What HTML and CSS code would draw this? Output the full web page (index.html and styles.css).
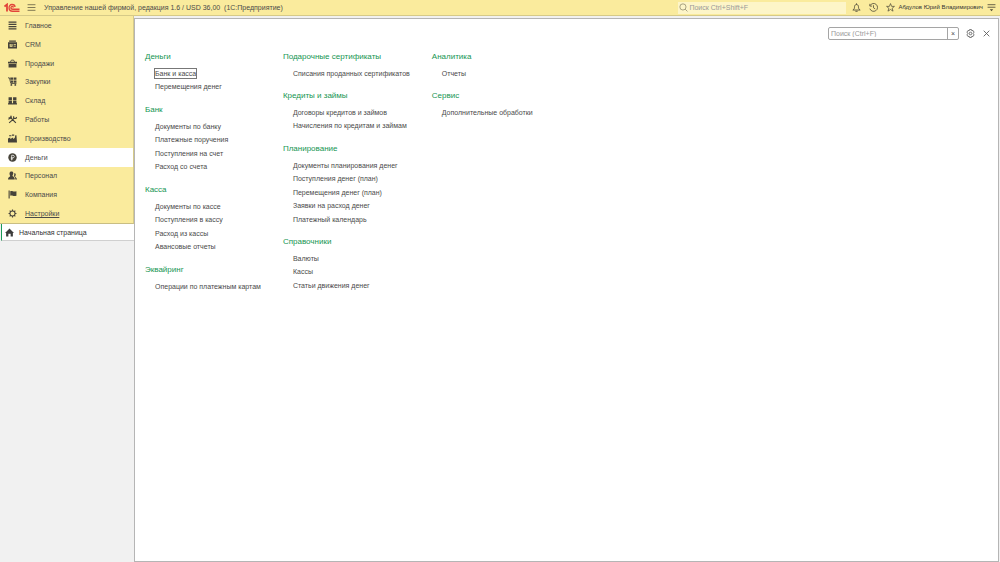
FILE: index.html
```html
<!DOCTYPE html>
<html lang="ru">
<head>
<meta charset="utf-8">
<title>Управление нашей фирмой</title>
<link rel="stylesheet" href="styles.css">
</head>
<body>
<header class="topbar">
  <svg class="logo" viewBox="0 0 32 20" fill="none" stroke="#e2443a" stroke-width="2.6"><path d="M1 7l5-4v14" stroke-width="3.600"/><path d="M31 16.500H17c-9 0-9-13.500-1-13.500 4 0 6 2 6 5"/><path d="M31 12.500H17.500c-5 0-4.500-5.500-1-5.500 1.500 0 2.500 .8 2.500 2"/></svg>
  <button class="icon-btn menu-btn" aria-label="Меню"><svg class="icon" viewBox="0 0 16 16" stroke="#6b6547" stroke-width="1.500"><path d="M1 3h14M1 8h14M1 13h14"/></svg></button>
  <h1 class="app-title">Управление нашей фирмой, редакция 1.6 / USD 36,00&nbsp; (1С:Предприятие)</h1>
  <label class="global-search">
    <svg class="icon" viewBox="0 0 16 16" fill="none" stroke="#8b8568" stroke-width="1.300"><circle cx="7" cy="7" r="5.500"/><path d="M11 11l4 4"/></svg>
    <input type="text" placeholder="Поиск Ctrl+Shift+F" aria-label="Поиск Ctrl+Shift+F">
  </label>
  <div class="tools">
    <button class="icon-btn" aria-label="Уведомления"><svg class="icon" viewBox="0 0 16 16" fill="none" stroke="#4e4a38" stroke-width="1.500"><path d="M1.500 12.500c2.500-1.500 3-3 3-6 0-5 7-5 7 0 0 3 .5 4.500 3 6z"/><path d="M6 14.800h4M8 .5V3"/></svg></button>
    <button class="icon-btn" aria-label="История"><svg class="icon" viewBox="0 0 16 16" fill="none" stroke="#4e4a38" stroke-width="1.400"><path d="M2 4.500A7 7 0 1 1 1.500 10M1.500 1.500v4h4M8 4v4.500l3 2"/></svg></button>
    <button class="icon-btn" aria-label="Избранное"><svg class="icon" viewBox="0 0 16 16" fill="none" stroke="#4e4a38" stroke-width="1.300"><path d="M8 1l2 5h5l-4 3.300 1.500 5.200L8 11.500l-4.500 3L5 9.300 1 6h5z"/></svg></button>
  </div>
  <a class="user" href="#">Абдулов Юрий Владимирович</a>
  <button class="icon-btn" aria-label="Настройка панели"><svg class="icon" viewBox="0 0 16 16" stroke="#4e4a38" stroke-width="1.500"><path d="M1 3h14M1 7.500h14"/><path d="M5 11h6l-3 3.500z" fill="#4e4a38" stroke="none"/></svg></button>
</header>
<div class="workspace">
  <aside class="sidebar">
    <nav class="sections">
      <a class="section" href="#"><svg class="icon" viewBox="0 0 16 16" stroke="#46433a" stroke-width="2"><path d="M1 2h14M1 6h14M1 10h14M1 14h14"/></svg>Главное</a>
      <a class="section" href="#"><svg class="icon" viewBox="0 0 16 16" fill="#46433a"><path fill-rule="evenodd" d="M2 1h12v2H2zM0 4h16v11H0zM3 7v5h5V7zM10 7v1.500h4V7zM10 10v1.500h4V10z"/><circle cx="5.500" cy="8.800" r="1.300"/></svg>CRM</a>
      <a class="section" href="#"><svg class="icon" viewBox="0 0 16 16" fill="#46433a"><path d="M1 9h14v6H1zM0 5h16v3H0z"/><path d="M4 6l2-4h4l2 4" fill="none" stroke="#46433a" stroke-width="1.500"/></svg>Продажи</a>
      <a class="section" href="#"><svg class="icon" viewBox="0 0 16 16" fill="#46433a"><path d="M4 1h5v4H4zM10 1h5v4h-5zM5 6h4v4H5zM10 6h5v4h-5z"/><path d="M0 1.500h2.500L5 11.500h10" fill="none" stroke="#46433a" stroke-width="1.500"/><circle cx="6" cy="14" r="1.700"/><circle cx="13" cy="14" r="1.700"/></svg>Закупки</a>
      <a class="section" href="#"><svg class="icon" viewBox="0 0 16 16" fill="#46433a"><path d="M1 2h6v5H1zM9 2h6v5H9zM1 8h6v5H1zM9 8h6v5H9zM0 13h16v2H0z"/></svg>Склад</a>
      <a class="section" href="#"><svg class="icon" viewBox="0 0 16 16" fill="none" stroke="#46433a" stroke-width="2"><path d="M4 4l10 10M2 14L11 6M1 5l3 1 2-2-1-3M10 2v4h4l2-2"/><path d="M1 8l4-5"/></svg>Работы</a>
      <a class="section" href="#"><svg class="icon" viewBox="0 0 16 16" fill="#46433a"><path d="M0 15V8l4-2v3l5-3v3l3-2 1-5h2l1 13zM2 2h4v2H2zM7 1h4v2H7z"/></svg>Производство</a>
      <a class="section section--active" href="#" aria-current="page"><svg class="icon" viewBox="0 0 16 16" fill="none"><circle cx="8" cy="8" r="7.500" fill="#46433a"/><path d="M6.500 13V4h2.500c3 0 3 4.500 0 4.500H5M5 10.500h4" stroke="#fff" stroke-width="1.300"/></svg>Деньги</a>
      <a class="section" href="#"><svg class="icon" viewBox="0 0 16 16" fill="#46433a"><path d="M6 1c5 0 3.500 5 2 7 0 2 4 2 4 7H0c0-4 3-4 4-6C2 6 2 1 6 1z"/><path d="M11 4c4 0 3 4 1.500 5.500 0 1.500 3 2 3.500 5.500h-3c0-3-1-4.500-2.500-6C11.500 7 11 5 11 4z"/></svg>Персонал</a>
      <a class="section" href="#"><svg class="icon" viewBox="0 0 16 16" fill="#46433a"><path d="M1 1h2v14H1zM4 2c4-1.500 5 2 11 0v8c-6 2-7-1.500-11 0z"/></svg>Компания</a>
      <a class="section section--underlined" href="#"><svg class="icon" viewBox="0 0 16 16" fill="none" stroke="#46433a"><circle cx="8" cy="8" r="4.500" stroke-width="1.800"/><path d="M8 1v2.500M8 12.500V15M1 8h2.500M12.500 8H15M3 3l2 2M11 11l2 2M13 3l-2 2M5 11l-2 2" stroke-width="2"/></svg>Настройки</a>
    </nav>
    <a class="home" href="#"><svg class="icon" viewBox="0 0 16 16" fill="#3c3c3c"><path d="M8 1l8 8h-2v6h-4v-5H6v5H2V9H0z"/></svg>Начальная страница</a>
  </aside>
  <main class="panel">
    <div class="panel-tools">
      <div class="panel-search">
        <input type="text" placeholder="Поиск (Ctrl+F)" aria-label="Поиск (Ctrl+F)">
        <button class="clear" aria-label="Очистить">×</button>
      </div>
      <button class="icon-btn" aria-label="Настройки"><svg class="icon" viewBox="0 0 16 16" fill="none" stroke="#555" stroke-width="1.400"><path d="M6.300 1h3.400l.6 2.200 2.200-.6L14.300 5.500 12.800 8l1.500 2.500-1.800 2.900-2.200-.6-.6 2.200H6.300l-.6-2.200-2.200.6-1.800-2.900L3.200 8 1.700 5.500l1.800-2.900 2.200.6z"/><circle cx="8" cy="8" r="2.300"/></svg></button>
      <button class="icon-btn" aria-label="Закрыть"><svg class="icon" viewBox="0 0 16 16" stroke="#555" stroke-width="1.500"><path d="M3 3l10 10M13 3L3 13"/></svg></button>
    </div>
    <div class="columns">
      <div class="column">
        <h2>Деньги</h2>
        <ul><li><a class="focused" href="#">Банк и касса</a></li><li><a href="#">Перемещения денег</a></li></ul>
        <h2>Банк</h2>
        <ul><li><a href="#">Документы по банку</a></li><li><a href="#">Платежные поручения</a></li><li><a href="#">Поступления на счет</a></li><li><a href="#">Расход со счета</a></li></ul>
        <h2>Касса</h2>
        <ul><li><a href="#">Документы по кассе</a></li><li><a href="#">Поступления в кассу</a></li><li><a href="#">Расход из кассы</a></li><li><a href="#">Авансовые отчеты</a></li></ul>
        <h2>Эквайринг</h2>
        <ul><li><a href="#">Операции по платежным картам</a></li></ul>
      </div>
      <div class="column">
        <h2>Подарочные сертификаты</h2>
        <ul><li><a href="#">Списания проданных сертификатов</a></li></ul>
        <h2>Кредиты и займы</h2>
        <ul><li><a href="#">Договоры кредитов и займов</a></li><li><a href="#">Начисления по кредитам и займам</a></li></ul>
        <h2>Планирование</h2>
        <ul><li><a href="#">Документы планирования денег</a></li><li><a href="#">Поступления денег (план)</a></li><li><a href="#">Перемещения денег (план)</a></li><li><a href="#">Заявки на расход денег</a></li><li><a href="#">Платежный календарь</a></li></ul>
        <h2>Справочники</h2>
        <ul><li><a href="#">Валюты</a></li><li><a href="#">Кассы</a></li><li><a href="#">Статьи движения денег</a></li></ul>
      </div>
      <div class="column">
        <h2>Аналитика</h2>
        <ul><li><a href="#">Отчеты</a></li></ul>
        <h2>Сервис</h2>
        <ul><li><a href="#">Дополнительные обработки</a></li></ul>
      </div>
    </div>
  </main>
</div>
</body>
</html>
```
FILE: styles.css
```css
* { box-sizing: border-box; }
body {
  margin: 0;
  min-height: 100vh;
  display: flex;
  flex-direction: column;
  background: #f1f1f1;
  color: #4a4a4a;
  font: 7px/13px "Liberation Sans", Arial, sans-serif;
}
a { color: inherit; text-decoration: none; }
input, button { font: inherit; color: inherit; }
h1, h2, ul { margin: 0; padding: 0; font-weight: normal; }
ul { list-style: none; }
.icon { display: block; width: 9px; height: 9px; flex: none; }
.icon-btn { padding: 0; border: 0; background: none; }

.topbar {
  display: flex;
  align-items: center;
  height: 16px;
  padding: 0 4px;
  background: #faeb9d;
  border-bottom: 1px solid #d6ca88;
}
.logo { width: 16px; height: 10px; }
.menu-btn { margin: 0 8px 0 7px; }
.app-title { flex: 1; font-size: 7px; white-space: nowrap; }
.global-search {
  display: flex;
  align-items: center;
  width: 168px;
  height: 12px;
  padding: 0 1px;
  background: #fdf5c8;
}
.global-search input {
  flex: 1;
  min-width: 0;
  padding: 0 1px;
  border: 0;
  background: none;
  outline: 0;
}
input::placeholder { color: #999; opacity: 1; }
.tools { display: flex; gap: 8px; margin: 0 3px 0 6px; }
.user { margin-right: 4px; color: #333; font-size: 6px; white-space: nowrap; }

.workspace { flex: 1; display: flex; }
.sidebar { width: 134px; flex: none; }
.sections {
  display: grid;
  grid-auto-rows: 1fr;
  height: 208px;
  background: #faeb9d;
  border-right: 1px solid #d6ca88;
  border-bottom: 1px solid #c9be83;
}
.section { display: flex; align-items: center; gap: 8px; padding-left: 8px; }
.section--active { background: #fff; }
.section--underlined { text-decoration: underline; }
.home {
  display: flex;
  align-items: center;
  gap: 5px;
  height: 17px;
  padding-left: 3px;
  background: #fff;
  border-left: 1px solid #1a9a57;
  border-bottom: 1px solid #d0d0d0;
  margin-left: 1px;
  color: #333;
}

.panel {
  flex: 1;
  margin: 2px 1px 0 0;
  padding: 8px 7px 0 10px;
  background: #fff;
  border: 1px solid #b5b5b5;
}
.panel-tools { display: flex; justify-content: flex-end; align-items: center; gap: 7px; }
.panel-search {
  display: flex;
  width: 131px;
  height: 13px;
  border: 1px solid #a5a5a5;
  border-radius: 2px;
}
.panel-search input {
  flex: 1;
  min-width: 0;
  padding: 0 2px;
  border: 0;
  outline: 0;
  background: none;
}
.clear {
  width: 11px;
  padding: 0;
  border: 0;
  border-left: 1px solid #a5a5a5;
  background: none;
  line-height: 11px;
}
.columns { display: flex; gap: 22px; margin-top: 10px; }
.column { white-space: nowrap; }
.column h2 { color: #159552; font-size: 8px; line-height: 14px; }
.column ul { padding: 3px 0 9px 10px; }
.column li { height: 13px; line-height: 13px; }
.column li:nth-child(even) { height: 14px; line-height: 14px; }
.focused { padding: 1px 0; outline: 1px solid #777; }
```
